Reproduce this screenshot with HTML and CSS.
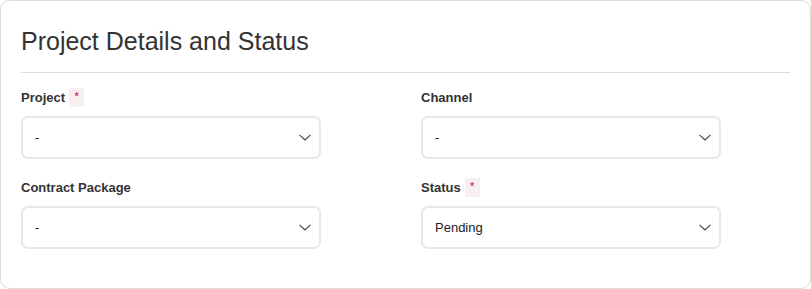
FILE: index.html
```html
<!DOCTYPE html>
<html>
  <head>
    <meta charset="utf-8" />
    <title>Project Details and Status</title>
    <link rel="stylesheet" href="styles.css">
  </head>
  <body>
    <div class="card">
      <h2 class="card-title">Project Details and Status</h2>
      <hr class="divider" />
      <div class="form-grid">
        <div class="field">
          <label class="field-label">Project <span class="req">*</span></label>
          <div class="select-wrap">
            <select class="select"><option>-</option></select>
            <svg class="chevron" width="12" height="7" viewBox="0 0 12 7"><path d="M0.5 0.8 L6 6 L11.5 0.8" fill="none" stroke="#444" stroke-width="1.1"/></svg>
          </div>
        </div>
        <div class="field">
          <label class="field-label">Channel</label>
          <div class="select-wrap">
            <select class="select"><option>-</option></select>
            <svg class="chevron" width="12" height="7" viewBox="0 0 12 7"><path d="M0.5 0.8 L6 6 L11.5 0.8" fill="none" stroke="#444" stroke-width="1.1"/></svg>
          </div>
        </div>
        <div class="field">
          <label class="field-label">Contract Package</label>
          <div class="select-wrap">
            <select class="select"><option>-</option></select>
            <svg class="chevron" width="12" height="7" viewBox="0 0 12 7"><path d="M0.5 0.8 L6 6 L11.5 0.8" fill="none" stroke="#444" stroke-width="1.1"/></svg>
          </div>
        </div>
        <div class="field">
          <label class="field-label">Status <span class="req">*</span></label>
          <div class="select-wrap">
            <select class="select"><option>Pending</option></select>
            <svg class="chevron" width="12" height="7" viewBox="0 0 12 7"><path d="M0.5 0.8 L6 6 L11.5 0.8" fill="none" stroke="#444" stroke-width="1.1"/></svg>
          </div>
        </div>
      </div>
    </div>
  </body>
</html>
```
FILE: styles.css
```css
* {
  margin: 0;
  padding: 0;
  box-sizing: border-box;
}
body {
  background: #ffffff;
  font-family: "Liberation Sans", Arial, sans-serif;
}
.card {
  width: 811px;
  height: 289px;
  border: 1px solid #dcdcdc;
  border-radius: 10px;
  padding: 25px 20px 0 20px;
  background: #fff;
}
.card-title {
  font-size: 25px;
  line-height: 30px;
  font-weight: normal;
  color: #333;
}
.divider {
  border: none;
  border-top: 1px solid #dddddd;
  margin-top: 16px;
}
.form-grid {
  display: grid;
  grid-template-columns: 1fr 1fr;
  column-gap: 31px;
  row-gap: 19px;
  margin-top: 15px;
}
.field-label {
  display: flex;
  align-items: center;
  height: 19px;
  font-size: 13px;
  font-weight: bold;
  color: #333;
}
.req {
  display: inline-flex;
  justify-content: center;
  align-items: flex-start;
  width: 15px;
  height: 19px;
  margin-left: 4px;
  padding-top: 3px;
  background: #f7eff2;
  color: #d6336c;
  font-size: 10px;
}
.select-wrap {
  position: relative;
  width: 300px;
  margin-top: 9px;
}
.select {
  appearance: none;
  -webkit-appearance: none;
  width: 100%;
  height: 43px;
  border: 2px solid #e8e8e8;
  border-radius: 7px;
  background: #fff;
  padding: 0 30px 0 12px;
  font-family: "Liberation Sans", Arial, sans-serif;
  font-size: 13px;
  color: #222;
  outline: none;
}
.chevron {
  position: absolute;
  right: 10px;
  top: 18px;
  pointer-events: none;
}
```
